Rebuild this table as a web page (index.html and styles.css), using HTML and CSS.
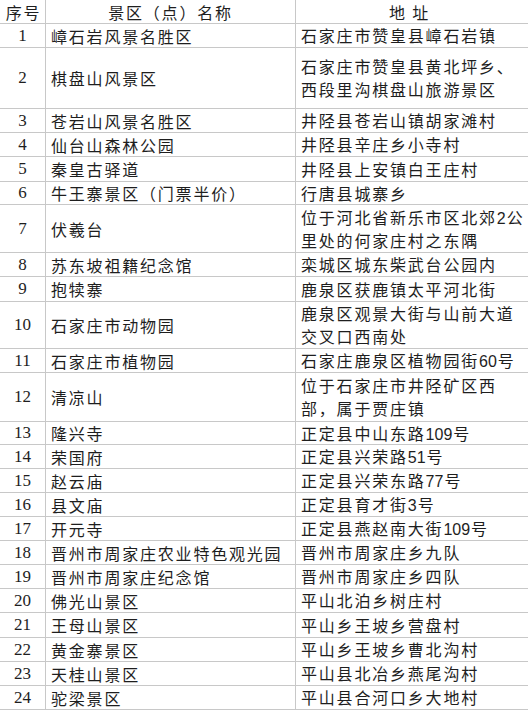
FILE: index.html
```html
<!DOCTYPE html>
<html lang="zh-CN">
<head>
<meta charset="utf-8">
<title>景区（点）名称</title>
<link rel="stylesheet" href="styles.css">
</head>
<body>
<div class="sheet">
  <div class="cell num head">序号</div><div class="cell name head">景区（点）名称</div><div class="cell addr head">地&nbsp;址</div>
  <div class="cell num">1</div><div class="cell name">嶂石岩风景名胜区</div><div class="cell addr"><span class="t">石家庄市赞皇县嶂石岩镇</span></div>
  <div class="cell num">2</div><div class="cell name">棋盘山风景区</div><div class="cell addr"><span class="t">石家庄市赞皇县黄北坪乡、<br>西段里沟棋盘山旅游景区</span></div>
  <div class="cell num">3</div><div class="cell name">苍岩山风景名胜区</div><div class="cell addr"><span class="t">井陉县苍岩山镇胡家滩村</span></div>
  <div class="cell num">4</div><div class="cell name">仙台山森林公园</div><div class="cell addr"><span class="t">井陉县辛庄乡小寺村</span></div>
  <div class="cell num">5</div><div class="cell name">秦皇古驿道</div><div class="cell addr"><span class="t">井陉县上安镇白王庄村</span></div>
  <div class="cell num">6</div><div class="cell name">牛王寨景区（门票半价）</div><div class="cell addr"><span class="t">行唐县城寨乡</span></div>
  <div class="cell num">7</div><div class="cell name">伏羲台</div><div class="cell addr"><span class="t">位于河北省新乐市区北郊<span class="digits">2</span>公<br>里处的何家庄村之东隅</span></div>
  <div class="cell num">8</div><div class="cell name">苏东坡祖籍纪念馆</div><div class="cell addr"><span class="t">栾城区城东柴武台公园内</span></div>
  <div class="cell num">9</div><div class="cell name">抱犊寨</div><div class="cell addr"><span class="t">鹿泉区获鹿镇太平河北街</span></div>
  <div class="cell num">10</div><div class="cell name">石家庄市动物园</div><div class="cell addr"><span class="t">鹿泉区观景大街与山前大道<br>交叉口西南处</span></div>
  <div class="cell num">11</div><div class="cell name">石家庄市植物园</div><div class="cell addr"><span class="t">石家庄鹿泉区植物园街<span class="digits">60</span>号</span></div>
  <div class="cell num">12</div><div class="cell name">清凉山</div><div class="cell addr"><span class="t">位于石家庄市井陉矿区西<br>部，属于贾庄镇</span></div>
  <div class="cell num">13</div><div class="cell name">隆兴寺</div><div class="cell addr"><span class="t">正定县中山东路<span class="digits">109</span>号</span></div>
  <div class="cell num">14</div><div class="cell name">荣国府</div><div class="cell addr"><span class="t">正定县兴荣路<span class="digits">51</span>号</span></div>
  <div class="cell num">15</div><div class="cell name">赵云庙</div><div class="cell addr"><span class="t">正定县兴荣东路<span class="digits">77</span>号</span></div>
  <div class="cell num">16</div><div class="cell name">县文庙</div><div class="cell addr"><span class="t">正定县育才街<span class="digits">3</span>号</span></div>
  <div class="cell num">17</div><div class="cell name">开元寺</div><div class="cell addr"><span class="t">正定县燕赵南大街<span class="digits">109</span>号</span></div>
  <div class="cell num">18</div><div class="cell name">晋州市周家庄农业特色观光园</div><div class="cell addr"><span class="t">晋州市周家庄乡九队</span></div>
  <div class="cell num">19</div><div class="cell name">晋州市周家庄纪念馆</div><div class="cell addr"><span class="t">晋州市周家庄乡四队</span></div>
  <div class="cell num">20</div><div class="cell name">佛光山景区</div><div class="cell addr"><span class="t">平山北泊乡树庄村</span></div>
  <div class="cell num">21</div><div class="cell name">王母山景区</div><div class="cell addr"><span class="t">平山乡王坡乡营盘村</span></div>
  <div class="cell num">22</div><div class="cell name">黄金寨景区</div><div class="cell addr"><span class="t">平山乡王坡乡曹北沟村</span></div>
  <div class="cell num">23</div><div class="cell name">天桂山景区</div><div class="cell addr"><span class="t">平山县北冶乡燕尾沟村</span></div>
  <div class="cell num">24</div><div class="cell name">驼梁景区</div><div class="cell addr"><span class="t">平山县合河口乡大地村</span></div>
</div>
</body>
</html>
```
FILE: styles.css
```css
html, body {
  margin: 0;
  padding: 0;
  background: #ffffff;
}

body {
  width: 528px;
  height: 710px;
  overflow: hidden;
}

.sheet {
  display: grid;
  grid-template-columns: 46px 250px 240px;
  grid-template-rows: 24px 24px 61px 24px 24px 25px 23px 48px 24px 25px 47px 24px 49px 23px 24px 24px 24px 24px 24px 24px 24px 25px 24px 24px 24px;
  font-family: "Noto Sans CJK SC", "Noto Sans", sans-serif;
  font-size: 16px;
  color: #1e1e1e;
}

.cell {
  box-sizing: border-box;
  border-right: 1px solid #c8c8c8;
  border-bottom: 1px solid #c8c8c8;
  display: flex;
  align-items: center;
  white-space: nowrap;
  line-height: 22px;
  letter-spacing: 1.8px;
}

.addr .t {
  display: block;
  line-height: 23px;
}

.digits {
  font-family: "Liberation Sans", sans-serif;
  letter-spacing: 0;
  margin-right: 1px;
  line-height: 1;
}

.num {
  justify-content: center;
  font-family: "Liberation Serif", "Noto Sans CJK SC", serif;
  font-size: 17px;
  letter-spacing: 0;
}

.num.head {
  font-family: "Noto Sans CJK SC", sans-serif;
  font-size: 16px;
  letter-spacing: 1.8px;
  padding-left: 2px;
}

.name,
.addr {
  padding-left: 5px;
}

.head.name,
.head.addr {
  justify-content: center;
  padding-left: 0;
}

.head.addr {
  padding-right: 12px;
}
```
